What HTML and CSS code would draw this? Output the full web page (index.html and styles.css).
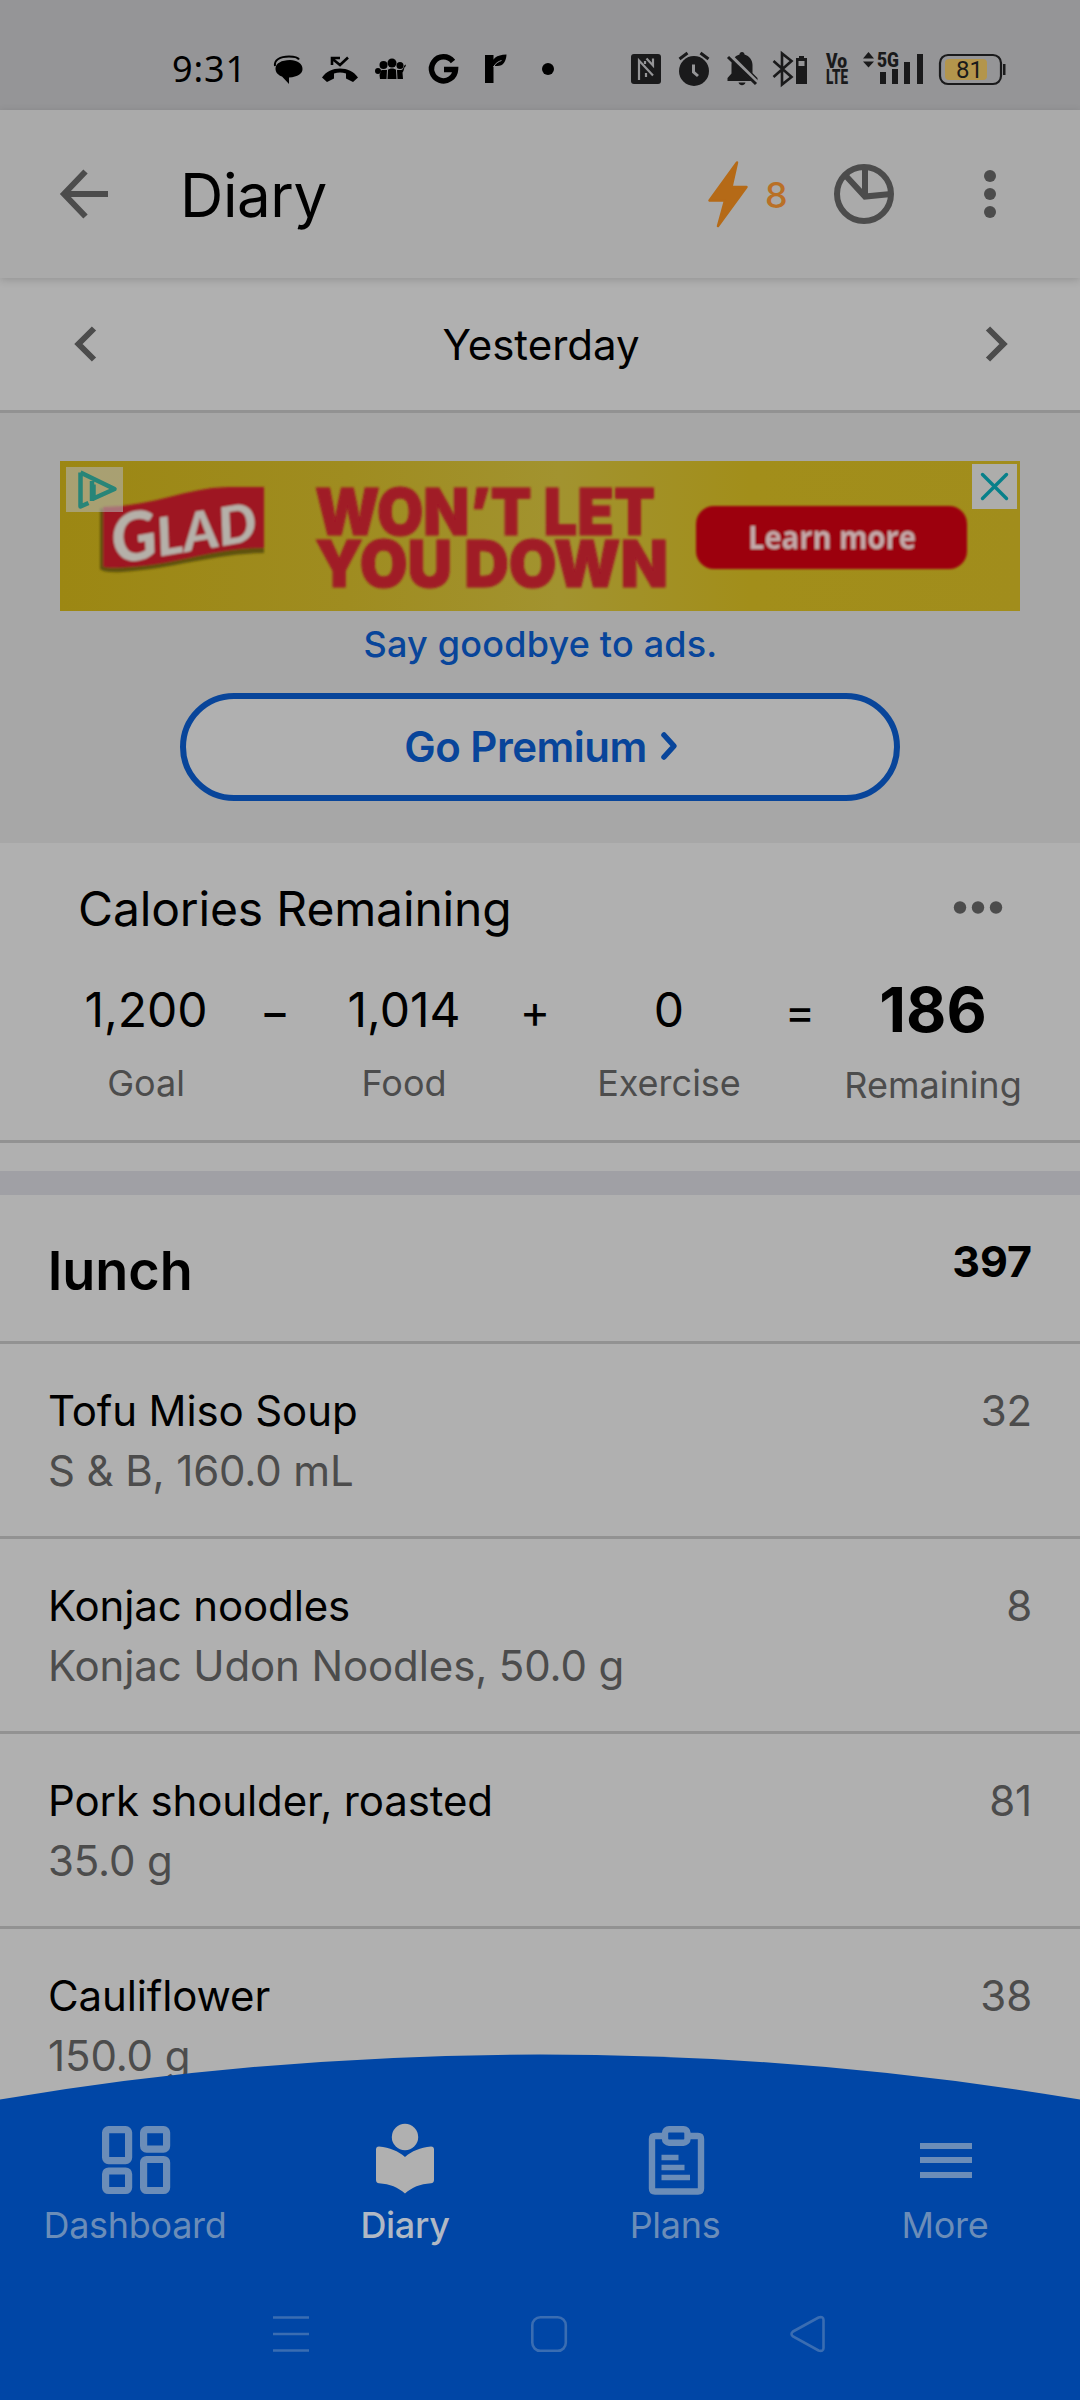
FILE: index.html
```html
<!DOCTYPE html>
<html lang="en">
<head>
<meta charset="utf-8">
<title>Diary</title>
<link rel="stylesheet" href="styles.css">
</head>
<body>
<div class="screen">
  <header class="status">
    <span class="clock">9:31</span>
    <div class="notifications">
      <svg class="cell" viewBox="262 49 52 40"><path d="M275 66c-1-6 5-9.500 14-9.500 5 0 9 1 10 3" fill="none" stroke="#000" stroke-width="2"/><path d="M290 60c7 0 12.500 3.500 12.500 9 0 4.500-4.500 8-13.500 8.500V84l-7-7.500c-4-1.500-6.500-4-6.500-8 0-5 6-8.500 14.500-8.500z"/></svg>
      <svg class="cell" viewBox="262 49 52 40"><path d="M280 65v-7h8M280 58.500l8 6.500 8-7.500" fill="none" stroke="#000" stroke-width="2.600"/><path d="M270 77.500c8-12 28-12 36 0l-5 4.500-7-3.500v-5c-4-1.200-8-1.200-12 0v5l-7 3.500z"/></svg>
      <svg class="cell" viewBox="262 49 52 40"><circle cx="288" cy="63" r="4.500"/><circle cx="279.500" cy="65" r="4"/><circle cx="296" cy="65.500" r="3.500"/><circle cx="274" cy="71" r="3"/><path d="M283.500 79l.5-9c1-2 7-2 8 0l.5 9zM276 79l-.5-4 2-5h5.500l-.5 9zM293.500 79l-.5-9h4c3 0 2-5 5-5.500l-.5 2c-2 1-1 4-3 6l.5 6.500z"/></svg>
      <svg class="cell" viewBox="262 49 52 40"><path d="M297 61.500A12 12 0 1 0 299.500 69.500H288" fill="none" stroke="#000" stroke-width="5.500"/></svg>
      <svg class="cell" viewBox="262 49 52 40"><path d="M277 55h8.500v28H277zM284.500 66c-.5-8 3.500-11 14-11.500-.3 7-3.500 12-10 11.500z"/><path d="M285.500 67c2-4 5-5.500 8-6.500" fill="none" stroke="#959597" stroke-width="1"/></svg>
      <svg class="cell" viewBox="262 49 52 40"><circle cx="288" cy="69" r="6"/></svg>
    </div>
    <div class="indicators">
      <svg class="cell" viewBox="622 49 48 40"><rect x="631" y="54" width="30" height="30" rx="3"/><path d="M639 80V60.500l14 15M645 61V64M646.500 58.500l6.500 7V58.500M646 73v4" fill="none" stroke="#959597" stroke-width="2.200"/></svg>
      <svg class="cell" viewBox="670 49 48 40"><circle cx="694" cy="71" r="15"/><path d="M679.500 59l8-6M708.500 59l-8-6" stroke="#1a1a1b" stroke-width="3"/><path d="M693.500 64.500v7.500l4.500 4" fill="none" stroke="#959597" stroke-width="3"/></svg>
      <svg class="cell" viewBox="718 49 48 40"><path d="M742 52c1.500 0 2.500 1 2.500 2.500 5 1.500 8 5.500 8 10.500v8l5 5v3h-30v-3l4-4.500V65c0-5 3-9 8-10.500 0-1.500 1-2.500 2.500-2.500zM738.500 82.500h7c-1 3.500-6 3.500-7 0z"/><path d="M729 55l29 29" stroke="#959597" stroke-width="5"/><path d="M728 57l28 27" stroke="#1a1a1b" stroke-width="3"/></svg>
      <svg class="cell" viewBox="766 49 48 40"><path d="M773.500 61l18 16-9.500 7.500v-31l9.500 7.500-18 16" fill="none" stroke="#1a1a1b" stroke-width="2.600"/><path d="M799 56h5v2h3v26h-11V58h3z"/><path d="M798.500 61h6v5h-6z" fill="#959597"/></svg>
      <svg class="cell" viewBox="814 49 46 40"><text class="volte" x="826" y="68" textLength="21" lengthAdjust="spacingAndGlyphs">Vo</text><text class="volte" x="826" y="84" textLength="22" lengthAdjust="spacingAndGlyphs">LTE</text></svg>
      <svg class="signal" viewBox="860 49 70 40"><path d="M863 58.500l5.500-6.500 5.500 6.500zM863 61.500l5.500 6 5.500-6z"/><text class="volte" x="877" y="67" textLength="22" lengthAdjust="spacingAndGlyphs">5G</text><path d="M880 72h6v12h-6zM892 69h6v15h-6zM904 62h6v22h-6zM917 54h6v30h-6z"/></svg>
      <svg class="battery" viewBox="930 49 80 40"><rect x="940" y="55" width="61" height="29" rx="8" fill="none" stroke="#1a1a1b" stroke-width="2.200"/><path d="M1003 64h2.500v11H1003z"/><rect x="945" y="59" width="42" height="21" rx="4" fill="#b3954c"/><text class="level" x="956" y="78">81</text></svg>
    </div>
  </header>

  <nav class="appbar">
    <svg class="back" viewBox="56 166 56 56"><path d="M108 194H67M85.500 171.500L64 194 85.500 216.500" fill="none" stroke="#4c4c4c" stroke-width="6"/></svg>
    <h1>Diary</h1>
    <svg class="bolt" viewBox="706 158 44 72"><path d="M737 162.500L709.500 200.500H725L718 226 746.500 187H731.500z" fill="#b56a17" stroke="#b56a17" stroke-width="2.500" stroke-linejoin="round"/></svg>
    <span class="streak">8</span>
    <svg class="pie" viewBox="830 160 68 68"><circle cx="864" cy="194" r="27" fill="none" stroke="#4c4c4c" stroke-width="6"/><path d="M865 168v28M846 176l19 20.500 26-2.500" fill="none" stroke="#4c4c4c" stroke-width="6"/></svg>
    <svg class="kebab" viewBox="980 166 20 56" fill="#4c4c4c"><circle cx="990" cy="176" r="6"/><circle cx="990" cy="194" r="6"/><circle cx="990" cy="212" r="6"/></svg>
  </nav>

  <section class="day">
    <svg class="chev" viewBox="70 324 30 40"><path d="M94 328.500L78.500 344l15.500 15.500" fill="none" stroke="#4c4c4c" stroke-width="6"/></svg>
    <span>Yesterday</span>
    <svg class="chev" viewBox="982 324 30 40"><path d="M988 328.500L1003.500 344l-15.500 15.500" fill="none" stroke="#4c4c4c" stroke-width="6"/></svg>
  </section>

  <section class="promo">
    <svg class="banner" viewBox="60 461 960 150">
      <defs>
        <linearGradient id="gold"><stop offset="0" stop-color="#9c8713"/><stop offset=".3" stop-color="#9f8c20"/><stop offset=".52" stop-color="#a2932f"/><stop offset=".72" stop-color="#a28e1a"/><stop offset="1" stop-color="#a18d1c"/></linearGradient>
        <filter id="soft"><feGaussianBlur stdDeviation=".8"/></filter>
      </defs>
      <rect x="60" y="461" width="960" height="150" fill="url(#gold)"/>
      <g filter="url(#soft)">
        <path d="M100 508v61q4 4 22 3c50-3 90-18 142-19v-5z" fill="#5f5210"/>
        <path d="M103 507c55-1 80-19 125-20h36v61c-55 0-90 19-150 20-8 0-11-1-11-2z" fill="#9e1624"/>
        <g class="glad" transform="translate(115 564) rotate(-9.500)"><text x="0" y="0" font-size="67" textLength="46" lengthAdjust="spacingAndGlyphs">G</text><text x="45" y="0" font-size="53" textLength="101" lengthAdjust="spacingAndGlyphs">LAD</text></g>
        <g class="slogan"><text x="315" y="535" textLength="340" lengthAdjust="spacingAndGlyphs">WON’T LET</text><text x="315" y="587" textLength="353" lengthAdjust="spacingAndGlyphs">YOU DOWN</text></g>
        <rect x="696" y="506" width="271" height="63" rx="18" fill="#9c000b"/>
        <text class="learn" x="748" y="549" textLength="168" lengthAdjust="spacingAndGlyphs">Learn more</text>
      </g>
      <rect x="66" y="467" width="57" height="45" fill="#b0b0b0" opacity=".6"/>
      <path d="M80.500 472.500v34l8-3.500M80.500 472.500l34 16.500-21 9.500v-14M92 481v20" fill="none" stroke="#288578" stroke-width="4.500" stroke-linejoin="round"/>
      <rect x="972" y="464" width="45" height="45" fill="#adadab"/>
      <path d="M982.500 474.500l24 24M1006.500 474.500l-24 24" stroke="#07808a" stroke-width="3.400" stroke-linecap="round"/>
    </svg>
    <p>Say goodbye to ads.</p>
    <a class="premium"><span>Go Premium</span><svg viewBox="656 730 24 34"><path d="M663 736l10 11-10 11" fill="none" stroke="#08459a" stroke-width="5.500" stroke-linecap="round" stroke-linejoin="round"/></svg></a>
  </section>

  <section class="calories">
    <div class="heading"><h2>Calories Remaining</h2>
      <svg viewBox="950 897 56 20" fill="#4c4c4c"><circle cx="960" cy="906.500" r="6.200"/><circle cx="978" cy="906.500" r="6.200"/><circle cx="996" cy="906.500" r="6.200"/></svg></div>
    <div class="sum">
      <div class="term"><b>1,200</b><span>Goal</span></div>
      <i>−</i>
      <div class="term"><b>1,014</b><span>Food</span></div>
      <i>+</i>
      <div class="term"><b>0</b><span>Exercise</span></div>
      <i>=</i>
      <div class="term total"><b>186</b><span>Remaining</span></div>
    </div>
  </section>
  <div class="band"></div>

  <section class="meal">
    <div class="mealhead"><h3>lunch</h3><strong>397</strong></div>
    <div class="food"><div><p>Tofu Miso Soup</p><p class="detail">S &amp; B, 160.0 mL</p></div><span>32</span></div>
    <div class="food"><div><p>Konjac noodles</p><p class="detail">Konjac Udon Noodles, 50.0 g</p></div><span>8</span></div>
    <div class="food"><div><p>Pork shoulder, roasted</p><p class="detail">35.0 g</p></div><span>81</span></div>
    <div class="food"><div><p>Cauliflower</p><p class="detail">150.0 g</p></div><span>38</span></div>
  </section>

  <footer class="bottom">
    <svg class="arc" viewBox="0 0 1080 46"><path d="M0 46V45.500A3262 3262 0 0 1 1080 45.500V46z" fill="#0046a6"/></svg>
    <div class="tabs">
      <a class="tab"><svg viewBox="95 2120 80 80" fill="none" stroke="#6b8db8" stroke-width="7.200"><rect x="105.600" y="2129.600" width="23" height="31" rx="3"/><rect x="143.600" y="2129.600" width="23" height="19.500" rx="3"/><rect x="105.600" y="2171" width="23" height="19.500" rx="3"/><rect x="143.600" y="2159.500" width="23" height="31" rx="3"/></svg><span>Dashboard</span></a>
      <a class="tab active"><svg viewBox="365 2120 80 80" fill="#b0b0b0"><circle cx="405" cy="2137" r="13.200"/><path d="M405 2157c-7-6-15-9.500-26-10.500q-3 0-3 3v30.500q0 3 3 3.200c11 .8 19 4 26 10.300 7-6.300 15-9.500 26-10.300q3-.2 3-3.200v-30.500q0-3-3-3c-11 1-19 4.500-26 10.500z"/></svg><span>Diary</span></a>
      <a class="tab"><svg viewBox="635 2120 80 80" fill="none" stroke="#6b8db8" stroke-width="6.400"><path d="M663 2136h-8q-3 0-3 3v49.500q0 3 3 3h43q3 0 3-3V2139q0-3-3-3h-8"/><rect x="665" y="2129.200" width="22.500" height="13.500" rx="4"/><path d="M661.500 2157.500h17M661.500 2167.500h23M661.500 2177.500h28.500" stroke-width="5.300"/></svg><span>Plans</span></a>
      <a class="tab"><svg viewBox="905 2120 80 80" fill="#6b8db8"><path d="M920 2143h52v6h-52zM920 2157h52v6h-52zM920 2172h52v6h-52z"/></svg><span>More</span></a>
    </div>
    <div class="system">
      <svg viewBox="270 2313 42 42"><path d="M273 2317.500h36M273 2334h36M273 2350.500h36"/></svg>
      <svg viewBox="528 2313 42 42"><rect x="532.300" y="2317.300" width="33.500" height="33.500" rx="8"/></svg>
      <svg viewBox="785 2313 42 42"><path d="M792 2331.500L817.500 2317.500Q822.500 2316 822.500 2320V2348Q822.500 2352 817.500 2350.500L792 2336.500Q789 2334 792 2331.500z"/></svg>
    </div>
  </footer>
</div>
</body>
</html>
```

FILE: styles.css
```css
* { box-sizing: border-box; margin: 0; padding: 0; }
body { background: #b0b0b0; font-family: Inter, "Liberation Sans", sans-serif; color: #000; }
svg { display: block; flex: none; }
.screen { position: relative; width: 1080px; height: 2400px; overflow: hidden; background: #b0b0b0; }

.status { height: 110px; background: #959597; display: flex; padding: 49px 70px 0 172px; }
.clock { width: 90px; font: 400 36px/40px "Noto Sans", sans-serif; letter-spacing: 0.9px; }
.notifications, .indicators { display: flex; height: 40px; }
.notifications .cell { width: 52px; height: 40px; }
.indicators { margin-left: 48px; fill: #1a1a1b; }
.indicators .cell { width: 48px; height: 40px; }
.indicators .cell:nth-child(5) { width: 46px; }
.signal { width: 70px; height: 40px; }
.battery { width: 80px; height: 40px; }
.volte { font: 900 20px Roboto, sans-serif; }
.level { font: 400 24px Roboto, sans-serif; }

.appbar { position: relative; height: 168px; background: #aaa; display: flex; align-items: center; padding-left: 56px; box-shadow: 0 2px 8px rgba(0, 0, 0, .16); }
.back { width: 56px; height: 56px; }
.appbar h1 { width: 526px; margin-left: 68px; font-size: 60px; font-weight: 400; line-height: 72px; letter-spacing: -0.4px; padding-top: 2px; }
.bolt { width: 44px; height: 72px; }
.streak { width: 65px; margin-left: 15px; font-size: 36px; font-weight: 500; color: #b97026; line-height: 44px; padding-top: 1px; }
.pie { width: 68px; height: 68px; }
.kebab { width: 20px; height: 56px; margin-left: 82px; }

.day { height: 135px; border-bottom: 3px solid #929292; padding: 1px 68px 0 70px; display: flex; align-items: center; justify-content: space-between; font-size: 42px; }
.chev { width: 30px; height: 40px; margin-top: -1px; }

.promo { height: 430px; background: #a7a7a7; padding: 48px 60px 0; display: flex; flex-direction: column; align-items: center; color: #08459a; }
.banner { width: 960px; height: 150px; }
.glad { font-family: Lato, sans-serif; font-weight: 900; font-style: italic; fill: #b5b0a9; }
.slogan { font-family: Inter, sans-serif; font-weight: 900; font-size: 64px; fill: #a01a26; stroke: #a01a26; stroke-width: 1; }
.learn { font: 700 32px "Open Sans", sans-serif; fill: #c3a9a9; }
.promo p { margin-top: 11px; font-size: 36px; font-weight: 500; line-height: 44px; letter-spacing: 0.2px; padding-left: 1px; }
.premium { margin-top: 27px; width: 720px; height: 108px; border: 6px solid #08459a; border-radius: 54px; background: #b0b0b0; display: flex; align-items: center; justify-content: center; gap: 10px; font-size: 42px; font-weight: 600; letter-spacing: -0.5px; padding: 0 0 2px 5px; }
.premium svg { width: 24px; height: 34px; }

.calories { height: 300px; border-bottom: 3px solid #929292; padding-top: 35px; }
.heading { display: flex; justify-content: space-between; align-items: center; height: 60px; padding: 0 74px 0 78px; }
.heading h2 { font-size: 48px; font-weight: 400; line-height: 60px; letter-spacing: -0.15px; padding-top: 1px; }
.heading svg { width: 56px; height: 20px; }
.sum { display: grid; grid-template-columns: 172px 86px 172px 90px 178px 84px 182px; padding: 42px 0 0 60px; text-align: center; }
.term { display: flex; flex-direction: column; gap: 21px; }
.term b { font-size: 48px; font-weight: 400; line-height: 60px; }
.term span { font-size: 36px; line-height: 44px; color: #4c4c4c; }
.sum i { font-style: normal; font-size: 46px; line-height: 62px; }
.total { gap: 23px; }
.term.total b { font-size: 62px; font-weight: 700; }
.band { height: 24px; margin-top: 28px; background: #a0a0a5; }

.mealhead { height: 149px; border-bottom: 3px solid #929292; display: flex; justify-content: space-between; padding: 45px 48px 0; }
.mealhead h3 { font-size: 54px; font-weight: 600; line-height: 62px; }
.mealhead strong { font-size: 43px; font-weight: 700; line-height: 42px; }
.food { height: 195px; border-bottom: 3px solid #929292; display: flex; justify-content: space-between; padding: 37px 48px 0; font-size: 42px; line-height: 60px; letter-spacing: -0.12px; }
.food span, .detail { color: #4c4c4c; }

.bottom { position: absolute; left: 0; bottom: 0; width: 1080px; height: 346px; color: #6b8db8; }
.arc { width: 1080px; height: 46px; }
.tabs { height: 194px; background: #0046a6; display: grid; grid-template-columns: repeat(4, 270px); padding-top: 20px; }
.tab { display: flex; flex-direction: column; align-items: center; font-size: 36px; line-height: 44px; letter-spacing: -0.3px; }
.tab svg { width: 80px; height: 80px; }
.tab span { margin-top: 3px; }
.active { font-weight: 500; color: #b0b8c4; }
.system { height: 106px; background: #0046a6; display: flex; padding: 19px 0 0 270px; gap: 216px; fill: none; stroke: #3a6db2; stroke-width: 2.6; }
.system svg { width: 42px; height: 42px; }
```
